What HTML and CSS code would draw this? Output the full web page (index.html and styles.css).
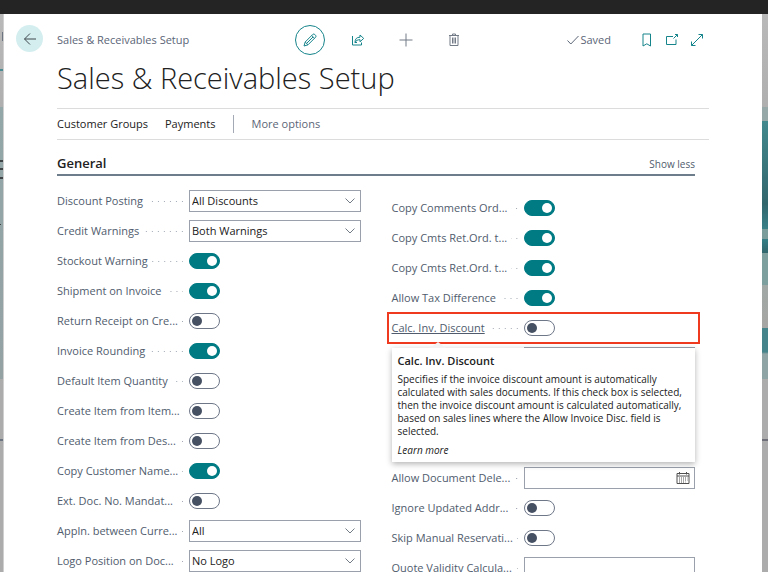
FILE: index.html
```html
<!DOCTYPE html>
<html lang="en">
    <head>
        <meta charset="UTF-8">
        <meta name="viewport" content="width=device-width, initial-scale=1.0">
        <title>Sales &amp; Receivables Setup</title>
        <link rel="stylesheet" href="styles.css">
    </head>
    <body>
        <div class="topbar"></div>
        <div class="workspace">
            <div class="backdrop backdrop-left"></div>
            <main class="page">
                <div class="back-col">
                    <button class="back" type="button" aria-label="Back">
                        <svg width="14" height="14" viewBox="0 0 14 14"><path d="M13 7H1.500M7 1.500L1.500 7L7 12.500"/></svg>
                    </button>
                </div>
                <div class="content">
                    <header class="header">
                        <span class="crumb">Sales &amp; Receivables Setup</span>
                        <div class="actions">
                            <button class="icon-btn edit" type="button" aria-label="Edit">
                                <svg width="14" height="14" viewBox="0 0 14 14"><path d="M1 13L2.200 9L9.800 1.400Q10.700 .6 11.700 1.400L12.600 2.300Q13.400 3.300 12.600 4.200L5 11.800ZM2.200 9L5 11.800M8.700 2.500L11.500 5.300M3.800 10.200L10 4"/></svg>
                            </button>
                            <button class="icon-btn" type="button" aria-label="Share">
                                <svg width="14" height="14" viewBox="0 0 14 14"><path d="M1.500 3V12H10.500V9.500M4 9.500C4 6 5.500 4.200 9 4.200V2L12.700 5.400L9 8.800V6.700C6.500 6.700 5 7.500 4 9.500ZM4 9.500H6"/></svg>
                            </button>
                            <button class="icon-btn grey" type="button" aria-label="New">
                                <svg width="14" height="14" viewBox="0 0 14 14"><path d="M7 .5V13.500M.5 7H13.500"/></svg>
                            </button>
                            <button class="icon-btn grey" type="button" aria-label="Delete">
                                <svg width="14" height="14" viewBox="0 0 14 14"><path d="M2 2.500H12M5.500 2.500V1H8.500V2.500M3 2.500V12.500H11V2.500M5.500 4.500V10.500M7 4.500V10.500M8.500 4.500V10.500"/></svg>
                            </button>
                        </div>
                        <div class="status">
                            <span class="saved"><svg width="12" height="12" viewBox="0 0 12 12"><path d="M.5 6.500L3.800 10L11.500 2"/></svg>Saved</span>
                            <button class="icon-btn" type="button" aria-label="Bookmark">
                                <svg width="14" height="14" viewBox="0 0 14 14"><path d="M3 1H10.500V13L6.800 10.800L3 13Z"/></svg>
                            </button>
                            <button class="icon-btn" type="button" aria-label="Open in new window">
                                <svg width="14" height="14" viewBox="0 0 14 14"><path d="M8 3.500H1.500V11.500H11V6.500M8.500 5.500L12.500 1.500M10 1.500H12.500V4"/></svg>
                            </button>
                            <button class="icon-btn" type="button" aria-label="Expand">
                                <svg width="14" height="14" viewBox="0 0 14 14"><path d="M1.500 12.500L12.500 1.500M8.500 1.500H12.500V5.500M1.500 8.500V12.500H5.500"/></svg>
                            </button>
                        </div>
                    </header>
                    <h1>Sales &amp; Receivables Setup</h1>
                    <nav class="menu">
                        <a href="#">Customer Groups</a>
                        <a href="#">Payments</a>
                        <a class="more" href="#">More options</a>
                    </nav>
                    <section class="general">
                        <div class="section-head">
                            <h2>General</h2>
                            <a href="#">Show less</a>
                        </div>
                        <form class="columns">
                            <div class="fields">
                                <div class="field">
                                    <label for="discount">Discount Posting</label>
                                    <select id="discount"><option>All Discounts</option></select>
                                </div>
                                <div class="field">
                                    <label for="credit">Credit Warnings</label>
                                    <select id="credit"><option>Both Warnings</option></select>
                                </div>
                                <div class="field">
                                    <label for="stockout">Stockout Warning</label>
                                    <input class="toggle" type="checkbox" id="stockout" checked>
                                </div>
                                <div class="field">
                                    <label for="shipment">Shipment on Invoice</label>
                                    <input class="toggle" type="checkbox" id="shipment" checked>
                                </div>
                                <div class="field">
                                    <label for="receipt">Return Receipt on Cre...</label>
                                    <input class="toggle" type="checkbox" id="receipt">
                                </div>
                                <div class="field">
                                    <label for="rounding">Invoice Rounding</label>
                                    <input class="toggle" type="checkbox" id="rounding" checked>
                                </div>
                                <div class="field">
                                    <label for="quantity">Default Item Quantity</label>
                                    <input class="toggle" type="checkbox" id="quantity">
                                </div>
                                <div class="field">
                                    <label for="item">Create Item from Item...</label>
                                    <input class="toggle" type="checkbox" id="item">
                                </div>
                                <div class="field">
                                    <label for="itemdesc">Create Item from Des...</label>
                                    <input class="toggle" type="checkbox" id="itemdesc">
                                </div>
                                <div class="field">
                                    <label for="custname">Copy Customer Name...</label>
                                    <input class="toggle" type="checkbox" id="custname" checked>
                                </div>
                                <div class="field">
                                    <label for="extdoc">Ext. Doc. No. Mandat...</label>
                                    <input class="toggle" type="checkbox" id="extdoc">
                                </div>
                                <div class="field">
                                    <label for="appln">Appln. between Curre...</label>
                                    <select id="appln"><option>All</option></select>
                                </div>
                                <div class="field">
                                    <label for="logo">Logo Position on Doc...</label>
                                    <select id="logo"><option>No Logo</option></select>
                                </div>
                            </div>
                            <div class="fields fields-right">
                                <div class="field">
                                    <label for="comments">Copy Comments Ord...</label>
                                    <input class="toggle" type="checkbox" id="comments" checked>
                                </div>
                                <div class="field">
                                    <label for="cmts1">Copy Cmts Ret.Ord. t...</label>
                                    <input class="toggle" type="checkbox" id="cmts1" checked>
                                </div>
                                <div class="field">
                                    <label for="cmts2">Copy Cmts Ret.Ord. t...</label>
                                    <input class="toggle" type="checkbox" id="cmts2" checked>
                                </div>
                                <div class="field">
                                    <label for="tax">Allow Tax Difference</label>
                                    <input class="toggle" type="checkbox" id="tax" checked>
                                </div>
                                <div class="field highlight">
                                    <label for="calc"><u>Calc. Inv. Discount</u></label>
                                    <input class="toggle" type="checkbox" id="calc" aria-describedby="calc-tip">
                                    <div class="tooltip" id="calc-tip" role="tooltip">
                                        <h3>Calc. Inv. Discount</h3>
                                        <p>Specifies if the invoice discount amount is automatically calculated with sales documents. If this check box is selected, then the invoice discount amount is calculated automatically, based on sales lines where the Allow Invoice Disc. field is selected.</p>
                                        <a href="#">Learn more</a>
                                    </div>
                                </div>
                                <div class="field covered">
                                    <input class="box" type="text">
                                </div>
                                <div class="field">
                                    <label for="deletion">Allow Document Dele...</label>
                                    <div class="box date">
                                        <input type="text" id="deletion">
                                        <button type="button" aria-label="Choose date">
                                            <svg width="14" height="14" viewBox="0 0 14 14"><path d="M1 2.500H13V12.500H1ZM1 5H13M3.500 1V3.500M10.500 1V3.500"/><path class="days" d="M3 7H11.500M3 9H11.500M3 11H9.500"/></svg>
                                        </button>
                                    </div>
                                </div>
                                <div class="field">
                                    <label for="addr">Ignore Updated Addr...</label>
                                    <input class="toggle" type="checkbox" id="addr">
                                </div>
                                <div class="field">
                                    <label for="manual">Skip Manual Reservati...</label>
                                    <input class="toggle" type="checkbox" id="manual">
                                </div>
                                <div class="field">
                                    <label for="quote">Quote Validity Calcula...</label>
                                    <input class="box" type="text" id="quote">
                                </div>
                            </div>
                        </form>
                    </section>
                </div>
            </main>
            <div class="backdrop backdrop-right"></div>
        </div>
    </body>
</html>
```
FILE: styles.css
```css
* {
    box-sizing: border-box;
}
body {
    margin: 0;
    height: 100vh;
    overflow: hidden;
    display: flex;
    flex-direction: column;
    font-family: 'Open Sans', 'Noto Sans', sans-serif;
    font-size: 11px;
    line-height: 14px;
    color: #212121;
}
h1, h2, h3, p {
    margin: 0;
}
a {
    color: inherit;
    text-decoration: none;
}
button, input, select {
    font: inherit;
    color: inherit;
    margin: 0;
}
button {
    padding: 0;
    border: none;
    background: none;
    cursor: pointer;
}
svg {
    display: block;
    fill: none;
    stroke: currentColor;
    stroke-width: 1;
}
.topbar {
    flex: none;
    height: 14px;
    background: #242424;
}
.workspace {
    flex: 1;
    min-height: 0;
    display: grid;
    grid-template-columns: 4px 1fr 6px;
}
/* dimmed role centre on both sides of the card */
.backdrop-left {
    background:
        linear-gradient(#3f4447, #3f4447) 0 146px / 3px 2px no-repeat,
        linear-gradient(#3f4447, #3f4447) 0 154px / 3px 2px no-repeat,
        linear-gradient(#3f4447, #3f4447) 0 163px / 3px 2px no-repeat,
        linear-gradient(#3f4447, #3f4447) 0 210px / 1px 1px no-repeat,
        linear-gradient(#6b7480, #6b7480) 2px 18px / 1px 9px no-repeat,
        linear-gradient(#4a8c92, #4a8c92) 0 55px / 3px 2px no-repeat,
        linear-gradient(#6b7480, #6b7480) 0 425px / 100% 2px no-repeat,
        linear-gradient(#b9b9b9 0, #afafaf 93px, #93a7a8 93px, #94a2a4 365px, #acacac 365px);
    border-right: 1px solid #cfcfcf;
}
.backdrop-right {
    background:
        linear-gradient(#6f6f7a, #6f6f7a) 0 425px / 100% 2px no-repeat,
        linear-gradient(#b9b9b9 0, #afafaf 93px, #97a8a8 93px, #97a8a8 107px, #42898d 107px, #32666d 190px, #3a8188 215px, #7a9c9b 215px, #7a9c9b 225px, #357f86 225px, #32666d 239px, #7d9f9e 239px, #7d9f9e 271px, #a0a8a5 271px, #a6a6a4 314px, #46848b 314px, #46848b 338px, #8fa5a5 340px, #8fa5a5 365px, #acacac 365px);
}
.page {
    display: flex;
    min-width: 0;
    padding-right: 53px;
    background: #fff;
    overflow: hidden;
}
.back-col {
    flex: none;
    width: 53px;
    padding: 11px 12px;
}
.back {
    width: 27px;
    height: 27px;
    display: grid;
    place-items: center;
    border-radius: 50%;
    background: #d4eeef;
    color: #40484f;
}
.content {
    flex: 1;
    min-width: 0;
}
.header {
    display: grid;
    grid-template-columns: 1fr auto 1fr;
    align-items: center;
    padding: 11px 5px 0 0;
    color: #5b6577;
}
.actions, .status {
    display: flex;
    align-items: center;
}
.actions {
    gap: 34px;
    margin-right: 5px;
}
.status {
    justify-content: flex-end;
    gap: 11px;
}
.icon-btn {
    color: #16848b;
}
.icon-btn.grey {
    color: #737b87;
}
.icon-btn.edit {
    width: 30px;
    height: 30px;
    margin-right: -8px;
    display: grid;
    place-items: center;
    border: 1px solid #16848b;
    border-radius: 50%;
}
.saved {
    display: flex;
    align-items: center;
    gap: 1px;
    margin-right: 18px;
}
h1 {
    font-size: 29px;
    line-height: 40px;
    font-weight: 300;
    padding: 3px 0 10px;
}
.menu {
    display: flex;
    align-items: center;
    gap: 17px;
    height: 32px;
    border-top: 1px solid #dcdcdc;
    border-bottom: 1px solid #dcdcdc;
}
.menu .more {
    padding-left: 18px;
    border-left: 1px solid #a3aab5;
    line-height: 18px;
    color: #5b6577;
}
.general {
    padding: 13px 14px 0 0;
}
.section-head {
    display: flex;
    justify-content: space-between;
    align-items: flex-end;
    padding-bottom: 1px;
    border-bottom: 2px solid #6e7d8c;
}
.section-head h2 {
    font-size: 13px;
    line-height: 20px;
    font-weight: 600;
}
.section-head a {
    font-size: 10px;
    line-height: 18px;
    color: #505c6d;
}
.columns {
    display: grid;
    grid-template-columns: 1fr 1fr;
    gap: 31px;
    padding-top: 14px;
}
.fields {
    display: flex;
    flex-direction: column;
    gap: 8px;
}
.fields-right {
    padding-top: 7px;
}
.field {
    display: grid;
    grid-template-columns: 126px 1fr;
    column-gap: 6px;
    align-items: center;
    height: 22px;
}
.field label {
    display: flex;
    align-items: center;
    gap: 4px;
    min-width: 0;
    white-space: nowrap;
    color: #505c6d;
}
/* dotted leader between label and control */
.field label::after {
    content: '';
    flex: 1;
    height: 1px;
    background: linear-gradient(90deg, transparent 5px, #a3aab5 5px) right / 6px 1px;
}
select, .box {
    width: 100%;
    height: 22px;
    border: 1px solid #9ba1ac;
    border-radius: 0;
    background: #fff;
}
select {
    appearance: none;
    padding: 0 2px;
    background: #fff url("data:image/svg+xml,%3Csvg xmlns='http://www.w3.org/2000/svg' width='10' height='6'%3E%3Cpath d='M.5 .5L5 5L9.500 .5' fill='none' stroke='%23737b87'/%3E%3C/svg%3E") right 5px center no-repeat;
}
.toggle {
    appearance: none;
    display: flex;
    align-items: center;
    width: 31px;
    height: 16px;
    padding: 0 2px;
    border: 1px solid #6e7788;
    border-radius: 8px;
    background: #fff;
}
.toggle::before {
    content: '';
    width: 10px;
    height: 10px;
    border-radius: 50%;
    background: #465063;
}
.toggle:checked {
    justify-content: flex-end;
    border-color: #007a83;
    background: #007a83;
}
.toggle:checked::before {
    background: #fff;
}
.highlight {
    position: relative;
    outline: 2px solid #f03a1f;
    outline-offset: 3px;
}
/* the tooltip hangs over this row and the three below it */
.covered {
    margin-bottom: 90px;
}
.covered .box {
    grid-column: 2;
}
.date {
    display: flex;
    align-items: center;
    padding-right: 4px;
    color: #505050;
}
.date input {
    flex: 1;
    min-width: 0;
    padding: 0 2px;
    border: none;
    background: none;
}
.days {
    stroke-dasharray: 1 1;
}
.tooltip {
    position: absolute;
    z-index: 1;
    top: 31px;
    left: 0;
    width: 100%;
    padding: 5px 6px;
    background: #fff;
    box-shadow: 0 2px 6px rgba(0, 0, 0, 0.3);
}
.tooltip::before {
    content: '';
    position: absolute;
    top: -6px;
    left: 38px;
    border: 8px solid transparent;
    border-top: none;
    border-bottom: 6px solid #f3f3f3;
}
.tooltip h3 {
    font-size: 11px;
    line-height: 16px;
    font-weight: 600;
}
.tooltip p {
    padding: 4px 0 5px;
    font-size: 10px;
    line-height: 13px;
}
.tooltip a {
    font-size: 10px;
    font-style: italic;
}
```
